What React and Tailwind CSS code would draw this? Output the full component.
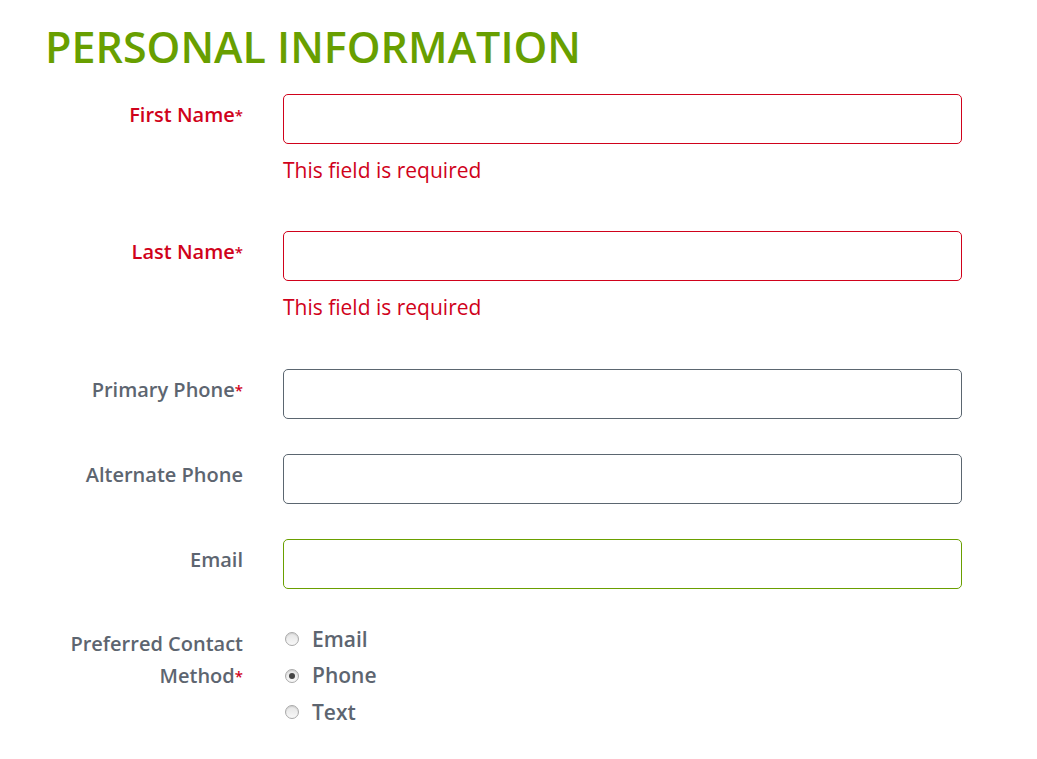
const Field = ({ label, required, error, focus, errorPad = "pb-[49px]" }) => {
  const border = error ? "border-[#d0021b]" : focus ? "border-[#6a9f00]" : "border-[#5b6670]";
  return (
    <div className="flex">
      <label
        className={`w-[198px] shrink-0 pt-[8px] text-right text-[20px] font-semibold leading-[26px] ${
          error ? "text-[#d0021b]" : "text-[#5d6570]"
        }`}
      >
        {label}
        {required && <span className="align-top text-[15px] text-[#d0021b]">*</span>}
      </label>
      <div className="ml-[40px] w-[679px]">
        <input className={`block h-[50px] w-full rounded-[5px] border bg-white ${border} outline-none`} />
        {error ? (
          <p className={`pt-[14px] ${errorPad} text-[21px] leading-[24px] text-[#d0021b]`}>This field is required</p>
        ) : (
          <div className="h-[35px]" />
        )}
      </div>
    </div>
  );
};

const Radio = ({ label, checked }) => (
  <div className="flex h-[36.5px] items-center">
    <span className="ml-[2px] flex h-[14px] w-[14px] items-center justify-center rounded-full border border-[#a9a9a9] bg-gradient-to-b from-[#e4e4e4] to-[#f8f8f8] shadow-[inset_0_1px_1px_rgba(0,0,0,0.1)]">
      {checked && <span className="h-[6px] w-[6px] rounded-full bg-[#444]" />}
    </span>
    <span className="ml-[13px] text-[21px] font-semibold text-[#5d6570]">{label}</span>
  </div>
);

export default function App() {
  return (
    <div
      className="min-h-[759px] w-[1037px] bg-white pl-[45px] pt-[20px]"
      style={{ fontFamily: "'Open Sans', 'Liberation Sans', sans-serif" }}
    >
      <h1 className="text-[43px] font-semibold leading-[54px] text-[#689f00]">PERSONAL INFORMATION</h1>
      <div className="mt-[20px]">
        <Field label="First Name" required error />
        <Field label="Last Name" required error errorPad="pb-[50px]" />
        <Field label="Primary Phone" required />
        <Field label="Alternate Phone" />
        <Field label="Email" focus />
        <div className="flex">
          <div className="w-[198px] shrink-0 pt-[4px] text-right text-[20px] font-semibold leading-[32px] text-[#5d6570]">
            Preferred Contact
            <br />
            Method<span className="align-top text-[15px] text-[#d0021b]">*</span>
          </div>
          <div className="ml-[40px] mt-[-3px]">
            <Radio label="Email" />
            <Radio label="Phone" checked />
            <Radio label="Text" />
          </div>
        </div>
      </div>
    </div>
  );
}
